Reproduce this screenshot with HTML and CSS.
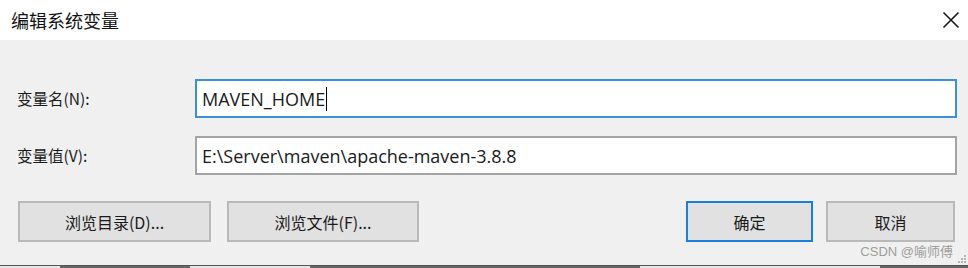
FILE: index.html
```html
<!DOCTYPE html>
<html lang="zh-CN">
<head>
<meta charset="utf-8">
<title>编辑系统变量</title>
<link rel="stylesheet" href="styles.css">
</head>
<body>
<div class="dialog">
  <div class="titlebar">
    <span class="title">编辑系统变量</span>
    <svg class="close" width="18" height="18" viewBox="0 0 18 18" aria-label="关闭">
      <path d="M1.5 1.5 L16.5 16.5 M16.5 1.5 L1.5 16.5" stroke="#1a1a1a" stroke-width="1.6" fill="none"/>
    </svg>
  </div>
  <div class="content">
    <div class="row">
      <label class="label">变量名(N):</label>
      <div class="field focused"><span>MAVEN_HOME</span><span class="caret"></span></div>
    </div>
    <div class="row">
      <label class="label">变量值(V):</label>
      <div class="field"><span>E:\Server\maven\apache-maven-3.8.8</span></div>
    </div>
    <div class="buttons">
      <div class="group">
        <button class="btn wide">浏览目录(D)...</button>
        <button class="btn wide">浏览文件(F)...</button>
      </div>
      <div class="group tight">
        <button class="btn ok">确定</button>
        <button class="btn cancel">取消</button>
      </div>
    </div>
  </div>
  <div class="watermark">CSDN @喻师傅</div>
  <svg class="grip" width="9" height="9" viewBox="0 0 9 9">
    <g fill="#b4b4b4">
      <rect x="7" y="1" width="2" height="2"/>
      <rect x="4" y="4" width="2" height="2"/><rect x="7" y="4" width="2" height="2"/>
      <rect x="1" y="7" width="2" height="2"/><rect x="4" y="7" width="2" height="2"/><rect x="7" y="7" width="2" height="2"/>
    </g>
  </svg>
  <div class="under"></div>
</div>
</body>
</html>
```
FILE: styles.css
```css
* { box-sizing: border-box; }
html, body { margin: 0; padding: 0; }
body {
  width: 968px;
  height: 268px;
  overflow: hidden;
  font-family: "Noto Sans CJK SC", "Noto Sans", sans-serif;
  color: #1a1a1a;
}
.dialog {
  position: relative;
  width: 968px;
  height: 268px;
  background: #f0f0f0;
  display: flex;
  flex-direction: column;
}
.titlebar {
  height: 40px;
  flex: none;
  background: #ffffff;
  display: flex;
  align-items: center;
  justify-content: space-between;
  padding: 0 8px 0 11px;
}
.title {
  font-size: 18px;
  line-height: 1;
  color: #111111;
  margin-top: -1px;
}
.close { display: block; margin-top: -1px; }
.content {
  padding: 39px 11px 0 17px;
  display: flex;
  flex-direction: column;
}
.row {
  display: flex;
  align-items: center;
  height: 39px;
}
.row + .row { margin-top: 18px; }
.label {
  width: 178px;
  flex: none;
  font-size: 15.5px;
  line-height: 1;
  color: #1a1a1a;
}
.field {
  flex: 1;
  height: 39px;
  background: #ffffff;
  border: 2px solid #a4a4a4;
  display: flex;
  align-items: center;
  padding: 0 5px;
  font-family: "Open Sans", "Noto Sans CJK SC", sans-serif;
  font-size: 18px;
  color: #1a1a1a;
  white-space: nowrap;
}
.field.focused { border-color: #3b8fe0; }
.caret {
  display: inline-block;
  width: 1px;
  height: 24px;
  background: #000;
  margin-left: 1px;
}
.buttons {
  margin: 26px 2px 0 1px;
  display: flex;
  justify-content: space-between;
}
.group { display: flex; gap: 16px; }
.group.tight { gap: 13px; }
.btn {
  height: 41px;
  background: #e1e1e1;
  border: 2px solid #b9b9b9;
  font-family: inherit;
  font-size: 16px;
  color: #1a1a1a;
  padding: 0;
  margin: 0;
}
.btn.wide { width: 193px; }
.btn.wide + .btn.wide { width: 192px; }
.btn.ok { width: 127px; border: 2px solid #1a7fdb; }
.btn.cancel { width: 129px; }
.watermark {
  position: absolute;
  right: 15px;
  top: 243px;
  font-family: "Liberation Sans", "Noto Sans CJK SC", sans-serif;
  font-size: 13px;
  line-height: 18px;
  color: #9d9d9d;
}
.grip {
  position: absolute;
  right: 2px;
  top: 254px;
}
.under {
  margin-top: auto;
  height: 3px;
  border-top: 1px solid #555555;
  background: linear-gradient(90deg, #e6e6e6 0 60px, #666 60px 190px, #e6e6e6 190px 310px, #666 310px 640px, #e6e6e6 640px 880px, #666 880px 968px);
}
```
